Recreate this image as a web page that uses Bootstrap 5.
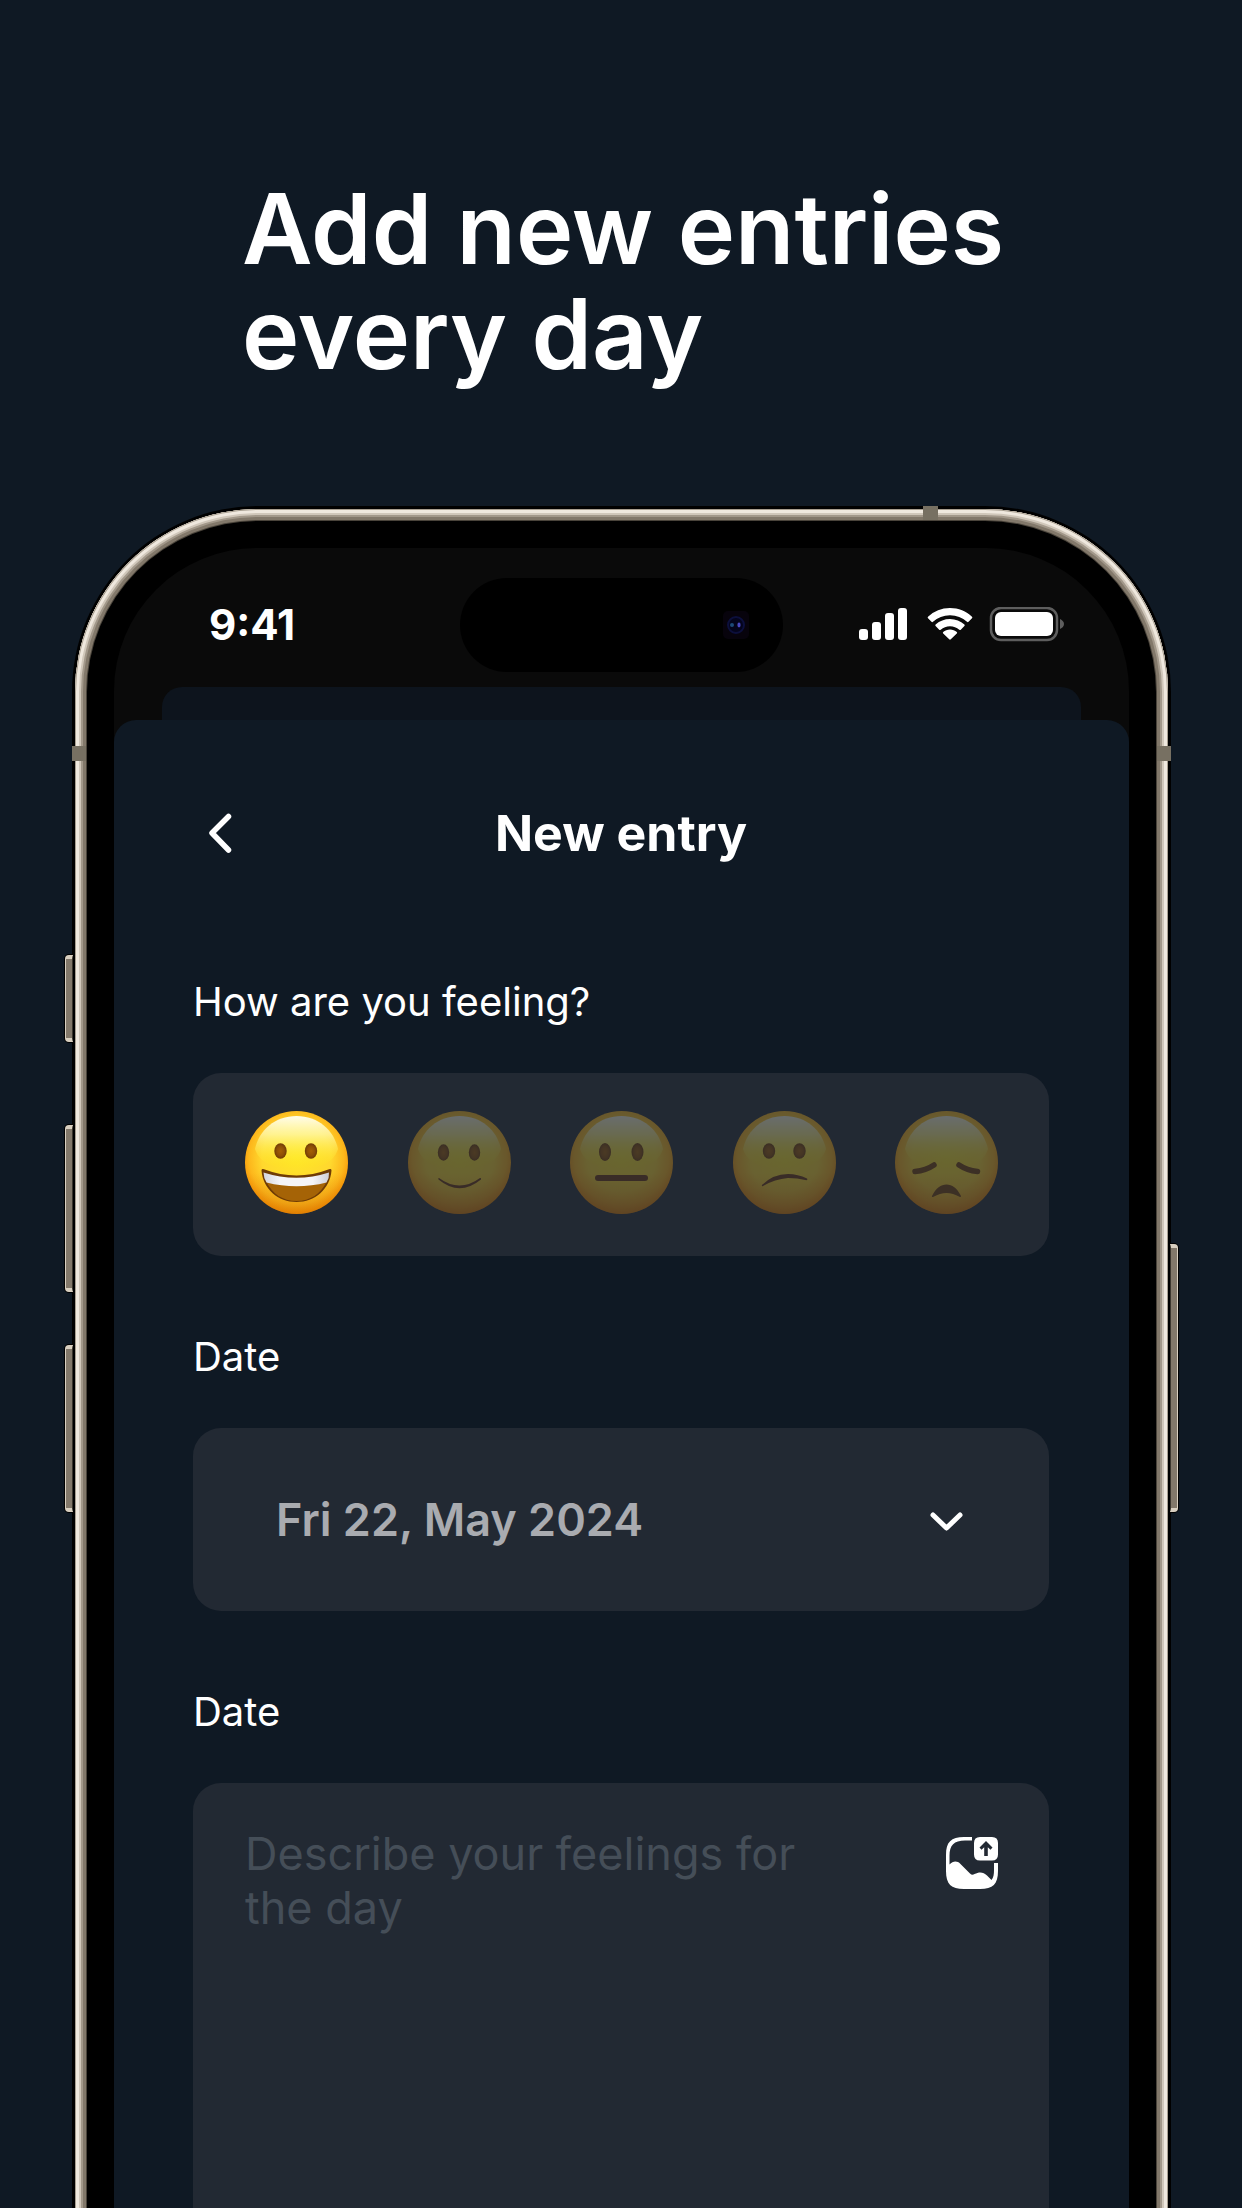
<!DOCTYPE html>
<html lang="en">
<head>
<meta charset="utf-8">
<meta name="viewport" content="width=device-width, initial-scale=1">
<title>New entry</title>
<link href="https://cdn.jsdelivr.net/npm/bootstrap@5.3.0/dist/css/bootstrap.min.css" rel="stylesheet">
<style>
  :root { --navy: #0f1924; --panel: #222933; --ink: #0a0a0a; }
  body { background: var(--navy); color: #fff; font-family: Inter, "Liberation Sans", sans-serif; }
  .showcase { height: 100vh; min-height: 1200px; padding: 176px 71px 0 72px; }
  .headline { font-size: 97px; line-height: 105px; font-weight: 600; margin: 0 60px 120px 170px; }

  /* Phone body: black rim, metal band, black bezel, screen */
  .phone { background: #000; border-radius: 186px; padding: 3px; }
  .metal {
    border-radius: 183px; padding: 39px; background: #000;
    box-shadow: inset 0 0 0 1px #a79e90, inset 0 0 0 4px #efe8de, inset 0 0 0 6px #d0c7ba,
      inset 0 0 0 8px #a2988a, inset 0 0 0 11px #82786a, inset 0 0 0 12px #4a443b;
  }
  .screen { background: var(--ink); border-radius: 143px; overflow: hidden; }
  .side-key {
    width: 8px; border: 1px solid #d8cfc0; border-width: 4px 1px; border-right-color: #3a352d;
    border-radius: 4px 0 0 4px; background: #82786a; box-shadow: 0 0 0 1px #000; left: -7px;
  }
  .side-key.power { left: auto; right: -7px; border-radius: 0 4px 4px 0; border-color: #d8cfc0; border-left-color: #3a352d; top: 738px; height: 268px; }
  .key-action { top: 449px; height: 87px; }
  .key-up { top: 619px; height: 167px; }
  .key-down { top: 839px; height: 167px; }
  .antenna { background: #777062; }
  .antenna.top { top: 0; right: 233px; width: 15px; height: 14px; }
  .antenna.left, .antenna.right { top: 240px; width: 14px; height: 15px; }
  .antenna.left { left: 0; }
  .antenna.right { right: 0; }

  .statusbar { padding: 30px 65px 15px 95px; }
  .clock { font-size: 42px; line-height: 50px; font-weight: 700; }
  .island { width: 323px; height: 94px; border-radius: 47px; background: #000; padding-right: 34px; margin-left: -31px; }

  .sheet-back { background: #0d141d; height: 33px; margin: 0 48px; border-radius: 20px 20px 0 0; }
  .sheet { background: var(--navy); border-radius: 22px 22px 0 0; padding: 82px 80px 0 79px; }
  .sheet-head { margin-bottom: 113px; }
  .sheet-title { font-size: 50px; line-height: 62px; font-weight: 700; }
  .side-slot { width: 52px; height: 52px; }
  .field-name { font-size: 40px; line-height: 50px; font-weight: 400; margin-bottom: 46px; float: none; }
  .panel { background: var(--panel); border-radius: 28px; }
  .panel-fixed { height: 183px; margin-bottom: 76px; }
  .moods { padding: 0 51px 4px 52px; }
  .mood { cursor: pointer; opacity: .32; }
  .btn-check:checked + .mood { opacity: 1; }
  .mood svg { width: 103px; height: 103px; display: block; }
  .date-row { padding: 0 86px 0 83px; }
  .date-pick { appearance: none; background: none; border: 0; outline: 0; color: #a9abb0; font-size: 45px; line-height: 56px; font-weight: 600; padding: 0; }
  .notes { padding: 44px 51px 44px 52px; gap: 90px; }
  .notes textarea { background: none; border: 0; outline: 0; resize: none; color: #fff; font-size: 45px; line-height: 54px; padding: 0; height: 720px; min-width: 0; }
  .notes textarea::placeholder { color: #454e58; opacity: 1; }
  .add-photo { margin-top: 10px; }
</style>
</head>
<body>
<svg width="0" height="0" class="position-absolute" aria-hidden="true">
  <defs>
    <radialGradient id="skin" cx="50%" cy="45%" r="56%">
      <stop offset="0" stop-color="#ffe629"/><stop offset=".6" stop-color="#ffd82e"/>
      <stop offset=".82" stop-color="#fdb81c"/><stop offset="1" stop-color="#f48a00"/>
    </radialGradient>
    <linearGradient id="shade" x1="0" y1="0" x2="0" y2="1">
      <stop offset=".6" stop-color="#d87800" stop-opacity="0"/><stop offset="1" stop-color="#c96a00" stop-opacity=".45"/>
    </linearGradient>
    <linearGradient id="gloss" x1="0" y1="0" x2="0" y2="1">
      <stop offset="0" stop-color="#fffef0" stop-opacity=".98"/><stop offset=".35" stop-color="#fffbb0" stop-opacity=".75"/>
      <stop offset="1" stop-color="#fff000" stop-opacity="0"/>
    </linearGradient>
    <radialGradient id="eye"><stop offset="0" stop-color="#a35f05"/><stop offset=".6" stop-color="#8e5006"/><stop offset="1" stop-color="#6f3b05"/></radialGradient>
    <linearGradient id="teeth"><stop offset="0" stop-color="#d5d5dc"/><stop offset=".25" stop-color="#f4f4f8"/><stop offset=".75" stop-color="#f4f4f8"/><stop offset="1" stop-color="#cfcfd6"/></linearGradient>
    <symbol id="face" viewBox="0 0 103 103">
      <circle cx="51.5" cy="51.5" r="51.5" fill="url(#skin)"/>
      <circle cx="51.5" cy="51.5" r="51.5" fill="url(#shade)"/>
      <path d="M51.500 5C73 5 89 19 93 38 88 54 70 58 51.500 58S15 54 10 38C14 19 30 5 51.500 5z" fill="url(#gloss)"/>
    </symbol>
  </defs>
</svg>

<main class="showcase d-flex flex-column overflow-hidden">
  <h1 class="headline">Add new entries every day</h1>

  <div class="phone position-relative">
    <span class="side-key key-action position-absolute"></span>
    <span class="side-key key-up position-absolute"></span>
    <span class="side-key key-down position-absolute"></span>
    <span class="side-key power position-absolute"></span>
    <div class="metal">
      <div class="screen">
        <div class="statusbar d-flex align-items-center">
          <div class="clock col">9:41</div>
          <div class="island d-flex align-items-center justify-content-end">
            <svg width="26" height="28" viewBox="0 0 26 28" aria-hidden="true"><rect width="26" height="28" rx="5" fill="#07030c"/><circle cx="13" cy="14" r="8" fill="#04041c" stroke="#0c0f3c" stroke-width="2"/><circle cx="9" cy="14" r="2" fill="#1d4a78"/><ellipse cx="16" cy="14" rx="1.6" ry="2.4" fill="#4a48c0"/></svg>
          </div>
          <div class="col d-flex justify-content-end align-items-center">
            <svg width="206" height="36" viewBox="0 0 206 36" aria-label="Signal, Wi-Fi, battery" role="img">
              <g fill="#fff">
                <rect x="1" y="22" width="9" height="11" rx="3"/><rect x="14" y="15" width="9" height="18" rx="3"/>
                <rect x="27" y="6" width="9" height="27" rx="3"/><rect x="40" y="1" width="9" height="32" rx="3"/>
                <path d="M92 1c8.500 0 16.300 3.300 22 8.700.5.500.5 1.100 0 1.600l-3.500 3.500c-.5.500-1.100.4-1.500 0A25 25 0 0 0 92 8.200a25 25 0 0 0-17 6.600c-.4.400-1 .5-1.500 0L70 11.300c-.5-.5-.5-1.100 0-1.600A32 32 0 0 1 92 1z"/>
                <path d="M92 12c5.600 0 10.600 2.100 14.400 5.500.5.500.5 1.100 0 1.600l-3.600 3.600c-.5.500-1 .4-1.500 0A14 14 0 0 0 92 19.200a14 14 0 0 0-9.300 3.500c-.5.400-1 .5-1.500 0l-3.600-3.600c-.5-.5-.5-1.100 0-1.600A22 22 0 0 1 92 12z"/>
                <path d="M92 22.500c2.600 0 5 .9 6.800 2.400.5.500.5 1 0 1.500l-6 5.900c-.5.500-1.100.5-1.600 0l-6-5.900c-.5-.5-.5-1 0-1.500 1.800-1.500 4.200-2.400 6.800-2.400z"/>
                <rect x="137" y="5" width="58" height="24" rx="6"/>
              </g>
              <rect x="133" y="1" width="66" height="32" rx="10" fill="none" stroke="#5e5e5e" stroke-width="2.500"/>
              <path d="M202 12c2.500 1 4 3 4 5s-1.500 4-4 5z" fill="#5e5e5e"/>
            </svg>
          </div>
        </div>

        <div class="sheet-back"></div>
        <div class="sheet">
          <header class="sheet-head d-flex align-items-center justify-content-between">
            <button type="button" class="side-slot btn p-0 border-0 d-flex align-items-center" aria-label="Back">
              <svg width="52" height="52" viewBox="0 0 52 52" fill="none" stroke="#fff" stroke-width="5.500" stroke-linecap="round" stroke-linejoin="round"><path d="M35.500 9.500 19 26l16.500 17"/></svg>
            </button>
            <h2 class="sheet-title m-0">New entry</h2>
            <span class="side-slot"></span>
          </header>

          <form>
            <fieldset>
              <legend class="field-name">How are you feeling?</legend>
              <div class="panel panel-fixed moods d-flex align-items-center justify-content-between">
                <div>
                  <input class="btn-check" type="radio" name="mood" id="m1" checked>
                  <label class="mood d-block" for="m1" aria-label="Great"><svg viewBox="0 0 103 103"><use href="#face"/>
                    <ellipse cx="35.500" cy="40" rx="6.200" ry="7.800" fill="url(#eye)"/><ellipse cx="66" cy="40" rx="6.200" ry="7.800" fill="url(#eye)"/>
                    <path d="M16.500 59.500q0-2 2.500-1.300 32.500 12.500 65 0 2.500-.7 2.500 1.300C85 78 70 91 51.500 91S18 78 16.500 59.500z" fill="#6f3b05"/>
                    <path d="M21 70q30 9 61 0C76 83 65 90 51.500 90S27 83 21 70z" fill="#a56306"/>
                    <path d="M18.500 61.500q33 10.500 65.500 0 .5 5-2.500 10-30 7.500-60 0-3-5-3-10z" fill="url(#teeth)"/></svg></label>
                </div>
                <div>
                  <input class="btn-check" type="radio" name="mood" id="m2">
                  <label class="mood d-block" for="m2" aria-label="Good"><svg viewBox="0 0 103 103"><use href="#face"/>
                    <ellipse cx="35.500" cy="41.500" rx="5.700" ry="8.300" fill="url(#eye)"/><ellipse cx="66.500" cy="41.500" rx="5.700" ry="8.300" fill="url(#eye)"/>
                    <path d="M31 67q20.500 15 41 0 1.500-.5 1 1.500-21.500 17.500-42.500 0-.5-2 .5-1.500z" fill="#6b3510"/></svg></label>
                </div>
                <div>
                  <input class="btn-check" type="radio" name="mood" id="m3">
                  <label class="mood d-block" for="m3" aria-label="Neutral"><svg viewBox="0 0 103 103"><use href="#face"/>
                    <ellipse cx="35" cy="41" rx="6" ry="9" fill="url(#eye)"/><ellipse cx="67.500" cy="41" rx="6" ry="9" fill="url(#eye)"/>
                    <rect x="25" y="64" width="53" height="6" rx="3" fill="#6b3510"/></svg></label>
                </div>
                <div>
                  <input class="btn-check" type="radio" name="mood" id="m4">
                  <label class="mood d-block" for="m4" aria-label="Uneasy"><svg viewBox="0 0 103 103"><use href="#face"/>
                    <ellipse cx="36" cy="40" rx="6.200" ry="7.700" fill="url(#eye)"/><ellipse cx="66.500" cy="40" rx="6.200" ry="7.700" fill="url(#eye)"/>
                    <path d="M29 74Q40 63 55 63q10 0 19 4.500 1 1-.5 1.800Q64 67 55 67q-13 1-25 8-1.500.5-1-1z" fill="#6b3510"/></svg></label>
                </div>
                <div>
                  <input class="btn-check" type="radio" name="mood" id="m5">
                  <label class="mood d-block" for="m5" aria-label="Sad"><svg viewBox="0 0 103 103"><use href="#face"/>
                    <path d="M20 60.500Q31 59.500 39 54M64 54Q72 59.500 82.500 60.500" fill="none" stroke="#754008" stroke-width="5.500" stroke-linecap="round"/>
                    <path d="M37 85C41 77 46 73.500 51.500 73.500S62 77 66 85q0 1.500-1.500.8Q58 82 51.500 82T38.500 85.800Q36.500 86.500 37 85z" fill="#754008"/></svg></label>
                </div>
              </div>
            </fieldset>

            <label class="field-name d-block" for="entry-date">Date</label>
            <div class="panel panel-fixed date-row d-flex align-items-center">
              <select id="entry-date" class="date-pick flex-grow-1"><option>Fri 22, May 2024</option></select>
              <svg width="33" height="20" viewBox="0 0 33 20" fill="none" stroke="#fff" stroke-width="5" stroke-linecap="round" stroke-linejoin="round" class="mt-1" aria-hidden="true"><path d="M3 3l13.500 13L30 3"/></svg>
            </div>

            <label class="field-name d-block" for="entry-notes">Date</label>
            <div class="panel notes d-flex align-items-start">
              <textarea id="entry-notes" class="flex-grow-1" placeholder="Describe your feelings for the day"></textarea>
              <button type="button" class="add-photo btn p-0 border-0 flex-shrink-0" aria-label="Add photo">
                <svg class="d-block" width="52" height="52" viewBox="0 0 52 52">
                  <path d="M26 0v3.500h-7C8 3.500 3.500 8 3.500 19v8.500C7 24 11 23.500 14.500 27l9.500 9.500q2 2 4.500.6c5-2.600 9-2 12.500 1.400l4.500 4.500c2-2.500 2.500-5.500 2.500-10v-7H52v8c0 13-5 18-18 18H18C5 52 0 47 0 34V18C0 5 5 0 18 0z" fill="#fff"/>
                  <path fill-rule="evenodd" d="M34 0h12q6 0 6 6v11.500q0 6-6 6H34q-6 0-6-6V6q0-6 6-6zM40 4l-6.500 6.500 2 2.200 2.700-2.400V19h3.600v-8.700l2.700 2.400 2-2.200z" fill="#fff"/>
                </svg>
              </button>
            </div>
          </form>
        </div>
      </div>
    </div>
    <span class="antenna top position-absolute"></span>
    <span class="antenna left position-absolute"></span>
    <span class="antenna right position-absolute"></span>
  </div>
</main>
<script src="https://cdn.jsdelivr.net/npm/bootstrap@5.3.0/dist/js/bootstrap.bundle.min.js"></script>
</body>
</html>
